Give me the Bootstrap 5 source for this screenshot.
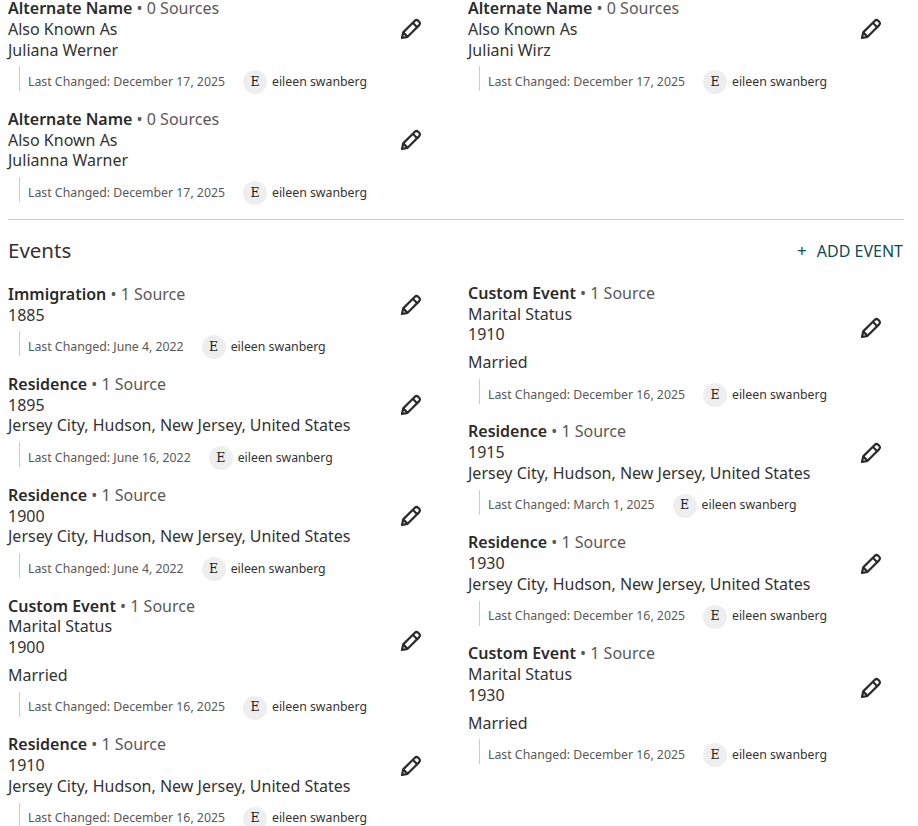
<!DOCTYPE html>
<html lang="en">
<head>
  <meta charset="UTF-8">
  <title>Person facts</title>
  <link rel="stylesheet" href="https://cdn.jsdelivr.net/npm/bootstrap@5.3.0/dist/css/bootstrap.min.css">
  <style>
    html, body { height: 826px; overflow: hidden; }
    body { font-family: "Noto Sans", sans-serif; font-size: 16px; line-height: 20.8px; color: #333; background: #fff; }
    .page-wrap { margin-top: -2px; padding: 0 15px 0 8px; }
    .fact-col { flex: 0 0 460px; }
    .fact-col + .fact-col { flex: 0 0 435px; }
    .left-events { padding-top: 1px; }
    .fact-item { width: 415px; margin-bottom: 17.5px; }
    .fact-title { font-weight: 600; color: #2b2b2b; }
    .fact-count { color: #595959; font-weight: 400; }
    .fact-note { margin-top: 7px; }
    .fact-lines { width: 390px; }
    .edit-btn { width: 24px; height: 24px; color: #2b2b2b; }
    .fact-meta { margin-top: 6px; margin-left: 11px; height: 25px; padding-left: 8px; padding-top: 7px; border-left: 1px solid #ccc; font-size: 12.3px; color: #595959; }
    .user-dot { width: 24px; height: 24px; margin-left: 18px; margin-right: 5px; background: #eee; color: #1f1f1f; font-family: "DejaVu Serif", serif; font-size: 12.5px; }
    .user-name { color: #333; }
    .split-line { margin: -1px 0 0; border-color: #ccc; opacity: 1; width: 896px; }
    .section-head { height: 63px; width: 895px; }
    .section-title { font-size: 20.5px; font-weight: 400; color: #333; margin: -2px 0 0; }
    .add-link { color: #0f4a5a; text-decoration: none; font-size: 16px; }
    .add-plus { margin-right: 10px; font-size: 17px; }
  </style>
</head>
<body>
  <div class="page-wrap">
    <div class="d-flex">
      <div class="fact-col" id="namesLeft"></div>
      <div class="fact-col" id="namesRight"></div>
    </div>

    <hr class="split-line">

    <div class="section-head d-flex align-items-center justify-content-between">
      <h2 class="section-title">Events</h2>
      <a class="add-link" href="#"><span class="add-plus">+</span>ADD EVENT</a>
    </div>

    <div class="d-flex">
      <div class="fact-col left-events" id="eventsLeft"></div>
      <div class="fact-col" id="eventsRight"></div>
    </div>
  </div>

  <script>
    const jerseyCity = 'Jersey City, Hudson, New Jersey, United States';
    const oneSource = '1 Source';
    const noSources = '0 Sources';

    const leftNames = [
      { name: 'Alternate Name', count: noSources, lines: ['Also Known As', 'Juliana Werner'], changed: 'December 17, 2025' },
      { name: 'Alternate Name', count: noSources, lines: ['Also Known As', 'Julianna Warner'], changed: 'December 17, 2025' }
    ];

    const rightNames = [
      { name: 'Alternate Name', count: noSources, lines: ['Also Known As', 'Juliani Wirz'], changed: 'December 17, 2025' }
    ];

    const leftEvents = [
      { name: 'Immigration', count: oneSource, lines: ['1885'], changed: 'June 4, 2022' },
      { name: 'Residence', count: oneSource, lines: ['1895', jerseyCity], changed: 'June 16, 2022' },
      { name: 'Residence', count: oneSource, lines: ['1900', jerseyCity], changed: 'June 4, 2022' },
      { name: 'Custom Event', count: oneSource, lines: ['Marital Status', '1900'], note: 'Married', changed: 'December 16, 2025' },
      { name: 'Residence', count: oneSource, lines: ['1910', jerseyCity], changed: 'December 16, 2025' }
    ];

    const rightEvents = [
      { name: 'Custom Event', count: oneSource, lines: ['Marital Status', '1910'], note: 'Married', changed: 'December 16, 2025' },
      { name: 'Residence', count: oneSource, lines: ['1915', jerseyCity], changed: 'March 1, 2025' },
      { name: 'Residence', count: oneSource, lines: ['1930', jerseyCity], changed: 'December 16, 2025' },
      { name: 'Custom Event', count: oneSource, lines: ['Marital Status', '1930'], note: 'Married', changed: 'December 16, 2025' }
    ];

    const pencil = '<svg width="24" height="24" viewBox="0 0 24 24" fill="none" stroke="currentColor" stroke-width="2.2" stroke-linejoin="round"><path d="M3 21l1.2-5.6L15.6 4c1.2-1.2 2.6-1.2 3.6-.2l1 1c1 1 1 2.4-.2 3.6L8.6 19.8z"/><path d="M13.8 5.8l4.4 4.4M4.4 15.6l4 4"/></svg>';

    function renderFact(fact) {
      const lines = fact.lines.map(line => `<div>${line}</div>`).join('');
      const note = fact.note ? `<div class="fact-note">${fact.note}</div>` : '';
      return `
        <div class="fact-item">
          <div class="d-flex align-items-center justify-content-between">
            <div class="fact-lines">
              <div><span class="fact-title">${fact.name}</span> <span class="fact-count">• ${fact.count}</span></div>
              ${lines}${note}
            </div>
            <a class="edit-btn d-block" href="#">${pencil}</a>
          </div>
          <div class="fact-meta d-flex align-items-center">
            <span>Last Changed: ${fact.changed}</span>
            <span class="user-dot rounded-circle d-flex align-items-center justify-content-center">E</span>
            <span class="user-name">eileen swanberg</span>
          </div>
        </div>`;
    }

    document.querySelector('#namesLeft').innerHTML = leftNames.map(renderFact).join('');
    document.querySelector('#namesRight').innerHTML = rightNames.map(renderFact).join('');
    document.querySelector('#eventsLeft').innerHTML = leftEvents.map(renderFact).join('');
    document.querySelector('#eventsRight').innerHTML = rightEvents.map(renderFact).join('');
  </script>
  <script src="https://cdn.jsdelivr.net/npm/bootstrap@5.3.0/dist/js/bootstrap.bundle.min.js"></script>
</body>
</html>
